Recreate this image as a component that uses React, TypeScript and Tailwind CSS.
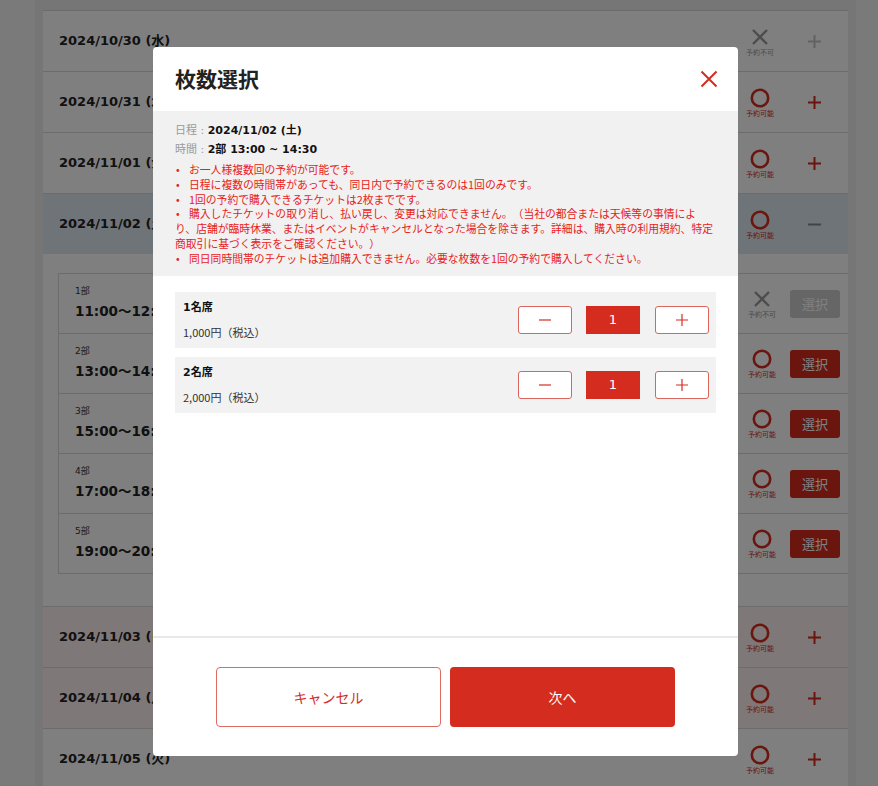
import React from "react";

const RED = "#d42d1f";

function StatusOk() {
  return (
    <div className="flex w-[40px] flex-col items-center">
      <svg width="20" height="20" viewBox="0 0 20 20">
        <circle cx="10" cy="10" r="8.2" fill="none" stroke={RED} strokeWidth="2.6" />
      </svg>
      <span className="mt-[1px] text-[7px] leading-[8px] text-[#d42d1f] font-['Noto_Sans_CJK_JP',sans-serif]">予約可能</span>
    </div>
  );
}

function StatusNg() {
  return (
    <div className="flex w-[40px] flex-col items-center">
      <svg width="20" height="20" viewBox="0 0 20 20">
        <path d="M3 3 L17 17 M17 3 L3 17" stroke="#9a9a9a" strokeWidth="2.4" fill="none" />
      </svg>
      <span className="mt-[1px] text-[7px] leading-[8px] text-[#9a9a9a] font-['Noto_Sans_CJK_JP',sans-serif]">予約不可</span>
    </div>
  );
}

function Plus({ color }: { color: string }) {
  return (
    <div className="flex w-[40px] items-center justify-center">
      <svg width="15" height="15" viewBox="0 0 15 15">
        <path d="M7.5 1 V14 M1 7.5 H14" stroke={color} strokeWidth="2" fill="none" />
      </svg>
    </div>
  );
}

function Minus({ color }: { color: string }) {
  return (
    <div className="flex w-[40px] items-center justify-center">
      <svg width="15" height="15" viewBox="0 0 15 15">
        <path d="M1 7.5 H14" stroke={color} strokeWidth="2" fill="none" />
      </svg>
    </div>
  );
}

function DateRow({ date, ok, action, bg }: { date: string; ok: boolean; action: "plus" | "plusGray" | "minus"; bg: string }) {
  return (
    <div className={`flex h-[61px] items-center border-t border-[#d9d9d9] pl-[16px] pr-[14px] ${bg}`}>
      <div className="flex-1 text-[13px] font-bold text-[#222]">{date}</div>
      <div className="flex items-center gap-[14px]">
        {ok ? <StatusOk /> : <StatusNg />}
        {action === "plus" && <Plus color={RED} />}
        {action === "plusGray" && <Plus color="#c4c4c4" />}
        {action === "minus" && <Minus color="#888888" />}
      </div>
    </div>
  );
}

function SubRow({ part, time, ok }: { part: string; time: string; ok: boolean }) {
  return (
    <div className="flex h-[60px] items-center border-b border-[#d9d9d9] pl-[16px] pr-[8px]">
      <div className="flex h-full flex-1 flex-col pt-[7px]">
        <span className="text-[9px] leading-[20px] text-[#333]">{part}</span>
        <span className="text-[13.5px] font-bold leading-[20px] text-[#222]">{time}</span>
      </div>
      <div className="flex items-center gap-[9px]">
        <div className="mr-[-1px]">{ok ? <StatusOk /> : <StatusNg />}</div>
        <div
          className={`flex h-[28px] w-[50px] items-center justify-center rounded-[3px] text-[13px] text-white font-['Noto_Sans_CJK_JP',sans-serif] ${ok ? "bg-[#d42d1f]" : "bg-[#cccccc]"}`}
        >
          選択
        </div>
      </div>
    </div>
  );
}

function Counter() {
  return (
    <div className="flex items-center">
      <div className="flex h-[28px] w-[54px] items-center justify-center rounded-[3px] border border-[#d9665c] bg-white">
        <svg width="14" height="14" viewBox="0 0 14 14">
          <path d="M1 7 H13" stroke={RED} strokeWidth="1.2" fill="none" />
        </svg>
      </div>
      <div className="ml-[14px] flex h-[28px] w-[54px] items-center justify-center bg-[#d42d1f] text-[13px] text-white">1</div>
      <div className="ml-[15px] flex h-[28px] w-[54px] items-center justify-center rounded-[3px] border border-[#d9665c] bg-white">
        <svg width="14" height="14" viewBox="0 0 14 14">
          <path d="M7 1 V13 M1 7 H13" stroke={RED} strokeWidth="1.2" fill="none" />
        </svg>
      </div>
    </div>
  );
}

function Ticket({ name, price }: { name: string; price: string }) {
  return (
    <div className="flex h-[56px] items-center justify-between bg-[#f2f2f2] pl-[8px] pr-[7px]">
      <div className="flex flex-col gap-[8px]">
        <span className="text-[11px] font-bold leading-[16px] text-[#111]">{name}</span>
        <span className="text-[11px] leading-[16px] text-[#333] font-['Noto_Sans_CJK_JP',sans-serif]">{price}</span>
      </div>
      <Counter />
    </div>
  );
}

const notes = [
  "お一人様複数回の予約が可能です。",
  "日程に複数の時間帯があっても、同日内で予約できるのは1回のみです。",
  "1回の予約で購入できるチケットは2枚までです。",
  "購入したチケットの取り消し、払い戻し、変更は対応できません。（当社の都合または天候等の事情により、店舗が臨時休業、またはイベントがキャンセルとなった場合を除きます。詳細は、購入時の利用規約、特定商取引に基づく表示をご確認ください。）",
  "同日同時間帯のチケットは追加購入できません。必要な枚数を1回の予約で購入してください。",
];

export default function App() {
  return (
    <div className="relative h-[786px] w-[878px] overflow-hidden bg-[#f5f5f5] font-['DejaVu_Sans','Noto_Sans_CJK_JP',sans-serif] [text-spacing-trim:space-all]">
      {/* background page */}
      <div className="ml-[35px] mr-[22px] h-full bg-[#ececec] px-[8px] pt-[10px]">
        <div className="bg-white">
          <DateRow date="2024/10/30 (水)" ok={false} action="plusGray" bg="bg-white" />
          <DateRow date="2024/10/31 (木)" ok action="plus" bg="bg-white" />
          <DateRow date="2024/11/01 (金)" ok action="plus" bg="bg-white" />
          <DateRow date="2024/11/02 (土)" ok action="minus" bg="bg-[#dde8f0]" />
          <div className="bg-white pb-[32px] pl-[15px] pt-[19px]">
            <div className="border-l border-t border-[#d9d9d9]">
              <SubRow part="1部" time="11:00〜12:30" ok={false} />
              <SubRow part="2部" time="13:00〜14:30" ok />
              <SubRow part="3部" time="15:00〜16:30" ok />
              <SubRow part="4部" time="17:00〜18:30" ok />
              <SubRow part="5部" time="19:00〜20:30" ok />
            </div>
          </div>
          <DateRow date="2024/11/03 (日)" ok action="plus" bg="bg-[#fdf0f0]" />
          <DateRow date="2024/11/04 (月)" ok action="plus" bg="bg-[#fdf0f0]" />
          <DateRow date="2024/11/05 (火)" ok action="plus" bg="bg-white" />
        </div>
      </div>

      {/* overlay */}
      <div className="absolute inset-0 bg-[rgba(0,0,0,0.5)]" />

      {/* modal */}
      <div className="absolute inset-0 flex items-start justify-center pl-[13px] pt-[47px]">
        <div className="flex h-[709px] w-[585px] flex-col overflow-hidden rounded-[4px] bg-white">
          <div className="flex h-[64px] shrink-0 items-center justify-between pl-[22px] pr-[20px]">
            <h1 className="text-[21px] font-bold text-[#222] font-['Noto_Sans_CJK_JP',sans-serif]">枚数選択</h1>
            <svg width="18" height="18" viewBox="0 0 18 18">
              <path d="M1.5 1.5 L16.5 16.5 M16.5 1.5 L1.5 16.5" stroke={RED} strokeWidth="2" fill="none" />
            </svg>
          </div>

          <div className="shrink-0 bg-[#f1f1f1] px-[22px] pb-[10px] pt-[10px]">
            <div className="text-[11px] leading-[19px]">
              <span className="text-[#9a9a9a]">日程 : </span>
              <span className="font-bold text-[#111]">2024/11/02 (土)</span>
            </div>
            <div className="text-[11px] leading-[19px]">
              <span className="text-[#9a9a9a]">時間 : </span>
              <span className="font-bold text-[#111]">2部 13:00 ~ 14:30</span>
            </div>
            <div className="mt-[3px] text-[10.8px] leading-[14.8px] text-[#e8211a] font-['Noto_Sans_CJK_JP',sans-serif]">
              {notes.map((n) => (
                <div key={n}>
                  <span className="inline-block w-[14px] pl-[1px]">•</span>
                  {n}
                </div>
              ))}
            </div>
          </div>

          <div className="flex flex-1 flex-col gap-[9px] px-[22px] pt-[16px]">
            <Ticket name="1名席" price="1,000円（税込）" />
            <Ticket name="2名席" price="2,000円（税込）" />
          </div>

          <div className="flex shrink-0 justify-center gap-[9px] border-t-2 border-[#e9e9e9] pb-[29px] pt-[29px]">
            <button className="flex h-[60px] w-[225px] items-center justify-center rounded-[4px] border border-[#dc6b60] bg-white text-[14px] text-[#d42d1f] font-['Noto_Sans_CJK_JP',sans-serif]">
              キャンセル
            </button>
            <button className="flex h-[60px] w-[225px] items-center justify-center rounded-[4px] bg-[#d42d1f] text-[14px] text-white font-['Noto_Sans_CJK_JP',sans-serif]">
              次へ
            </button>
          </div>
        </div>
      </div>
    </div>
  );
}
